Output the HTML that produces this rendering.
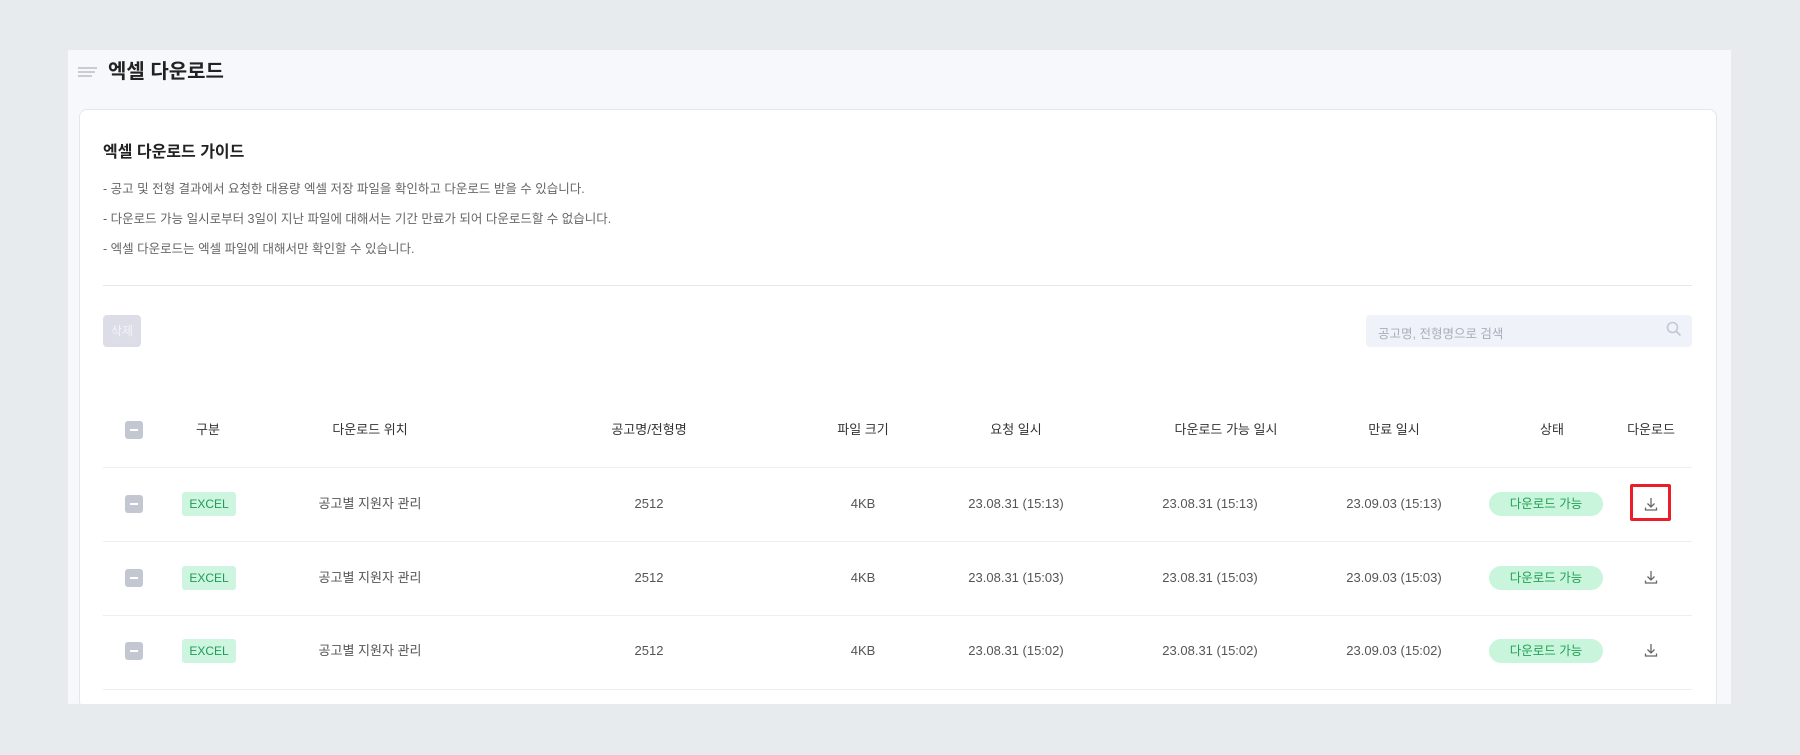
<!DOCTYPE html>
<html><head><meta charset="utf-8"><style>
*{margin:0;padding:0;box-sizing:border-box}
html,body{width:1800px;height:755px;overflow:hidden}
body{background:#e8ebee;font-family:"Liberation Sans","Noto Sans CJK KR",sans-serif;position:relative;color:#333}
.a{position:absolute}
#panel{left:68px;top:50px;width:1663px;height:654px;background:#f7f8fb;overflow:hidden}
#card{left:79px;top:109px;width:1638px;height:600px;background:#fff;border:1px solid #e3e6ec;border-radius:8px}
.t{position:absolute;white-space:nowrap;transform:translateX(-50%);font-size:13px;color:#555;line-height:16px}
.h{color:#333;font-size:13px}
.line{position:absolute;left:103px;width:1589px;height:1px;background:#eceef1}
.cb{position:absolute;left:125px;width:18px;height:18px;border-radius:3px;background:#c3c7d1}
.cb:after{content:"";position:absolute;left:5px;top:8px;width:8px;height:2px;background:#fff}
.ex{position:absolute;left:182px;width:54px;height:24px;background:#cdf5df;border-radius:3px;color:#1f9c57;font-size:12px;text-align:center;line-height:24px}
.pill{position:absolute;left:1489px;width:114px;height:24px;background:#c9f5dc;border-radius:12px;color:#23a156;font-size:12.5px;text-align:center;line-height:24px}
.dl{position:absolute;left:1643px;width:16px;height:16px}
#clip{position:absolute;left:0;top:0;width:1800px;height:704px;overflow:hidden}
</style></head><body>
<div id="clip">
<div id="panel" class="a"></div>
<svg class="a" style="left:78px;top:67px" width="20" height="10"><rect x="0" y="0" width="19" height="2" fill="#c8ccd4"/><rect x="0" y="4" width="17" height="2" fill="#c8ccd4"/><rect x="0" y="8" width="14" height="2" fill="#c8ccd4"/></svg>
<div class="a" style="left:108px;top:59px;font-size:20px;font-weight:bold;color:#222;line-height:26px">엑셀 다운로드</div>
<div id="card" class="a"></div>
<div class="a" style="left:103px;top:138px;font-size:16px;font-weight:bold;color:#222">엑셀 다운로드 가이드</div>
<div class="a" style="left:103px;top:178px;font-size:12.5px;color:#666">- 공고 및 전형 결과에서 요청한 대용량 엑셀 저장 파일을 확인하고 다운로드 받을 수 있습니다.</div>
<div class="a" style="left:103px;top:208px;font-size:12.5px;color:#666">- 다운로드 가능 일시로부터 3일이 지난 파일에 대해서는 기간 만료가 되어 다운로드할 수 없습니다.</div>
<div class="a" style="left:103px;top:238px;font-size:12.5px;color:#666">- 엑셀 다운로드는 엑셀 파일에 대해서만 확인할 수 있습니다.</div>
<div class="line" style="top:285px;background:#e6e8ec"></div>
<div class="a" style="left:103px;top:315px;width:38px;height:32px;background:#dcdde7;border-radius:4px;color:#f3f4f8;font-size:12px;text-align:center;line-height:32px">삭제</div>
<div class="a" style="left:1366px;top:315px;width:326px;height:32px;background:#eff2f8;border-radius:4px"></div>
<div class="a" style="left:1378px;top:323px;font-size:12.5px;color:#a9adb8">공고명, 전형명으로 검색</div>
<svg class="a" style="left:1666px;top:321px" width="16" height="16" viewBox="0 0 16 16"><circle cx="6.5" cy="6.5" r="5" fill="none" stroke="#c3c7d0" stroke-width="1.6"/><path d="M10.2 10.2L14.5 14.5" stroke="#c3c7d0" stroke-width="1.8"/></svg>

<div class="cb" style="top:421px"></div>
<div class="t h" style="left:208px;top:422px">구분</div>
<div class="t h" style="left:370px;top:422px">다운로드 위치</div>
<div class="t h" style="left:649px;top:422px">공고명/전형명</div>
<div class="t h" style="left:863px;top:422px">파일 크기</div>
<div class="t h" style="left:1016px;top:422px">요청 일시</div>
<div class="t h" style="left:1226px;top:422px">다운로드 가능 일시</div>
<div class="t h" style="left:1394px;top:422px">만료 일시</div>
<div class="t h" style="left:1552px;top:422px">상태</div>
<div class="t h" style="left:1651px;top:422px">다운로드</div>
<div class="line" style="top:467px"></div>

<div class="cb" style="top:495px"></div><div class="ex" style="top:492px">EXCEL</div>
<div class="t" style="left:370px;top:496px">공고별 지원자 관리</div><div class="t" style="left:649px;top:496px">2512</div><div class="t" style="left:863px;top:496px">4KB</div>
<div class="t" style="left:1016px;top:496px">23.08.31 (15:13)</div><div class="t" style="left:1210px;top:496px">23.08.31 (15:13)</div><div class="t" style="left:1394px;top:496px">23.09.03 (15:13)</div>
<div class="pill" style="top:492px">다운로드 가능</div>
<svg class="dl" style="top:496px" viewBox="0 0 16 16"><path d="M8 2v9M4.5 7.5L8 11l3.5-3.5M2.5 11.5v2.5h11v-2.5" fill="none" stroke="#666" stroke-width="1.3"/></svg>
<div class="a" style="left:1630px;top:484px;width:41px;height:37px;border:3.5px solid #ea1d28;border-radius:2px"></div>
<div class="line" style="top:541px"></div>

<div class="cb" style="top:569px"></div><div class="ex" style="top:566px">EXCEL</div>
<div class="t" style="left:370px;top:570px">공고별 지원자 관리</div><div class="t" style="left:649px;top:570px">2512</div><div class="t" style="left:863px;top:570px">4KB</div>
<div class="t" style="left:1016px;top:570px">23.08.31 (15:03)</div><div class="t" style="left:1210px;top:570px">23.08.31 (15:03)</div><div class="t" style="left:1394px;top:570px">23.09.03 (15:03)</div>
<div class="pill" style="top:566px">다운로드 가능</div>
<svg class="dl" style="top:569px" viewBox="0 0 16 16"><path d="M8 2v9M4.5 7.5L8 11l3.5-3.5M2.5 11.5v2.5h11v-2.5" fill="none" stroke="#666" stroke-width="1.3"/></svg>
<div class="line" style="top:615px"></div>

<div class="cb" style="top:642px"></div><div class="ex" style="top:639px">EXCEL</div>
<div class="t" style="left:370px;top:643px">공고별 지원자 관리</div><div class="t" style="left:649px;top:643px">2512</div><div class="t" style="left:863px;top:643px">4KB</div>
<div class="t" style="left:1016px;top:643px">23.08.31 (15:02)</div><div class="t" style="left:1210px;top:643px">23.08.31 (15:02)</div><div class="t" style="left:1394px;top:643px">23.09.03 (15:02)</div>
<div class="pill" style="top:639px">다운로드 가능</div>
<svg class="dl" style="top:642px" viewBox="0 0 16 16"><path d="M8 2v9M4.5 7.5L8 11l3.5-3.5M2.5 11.5v2.5h11v-2.5" fill="none" stroke="#666" stroke-width="1.3"/></svg>
<div class="line" style="top:689px"></div>
</div>
</body></html>
